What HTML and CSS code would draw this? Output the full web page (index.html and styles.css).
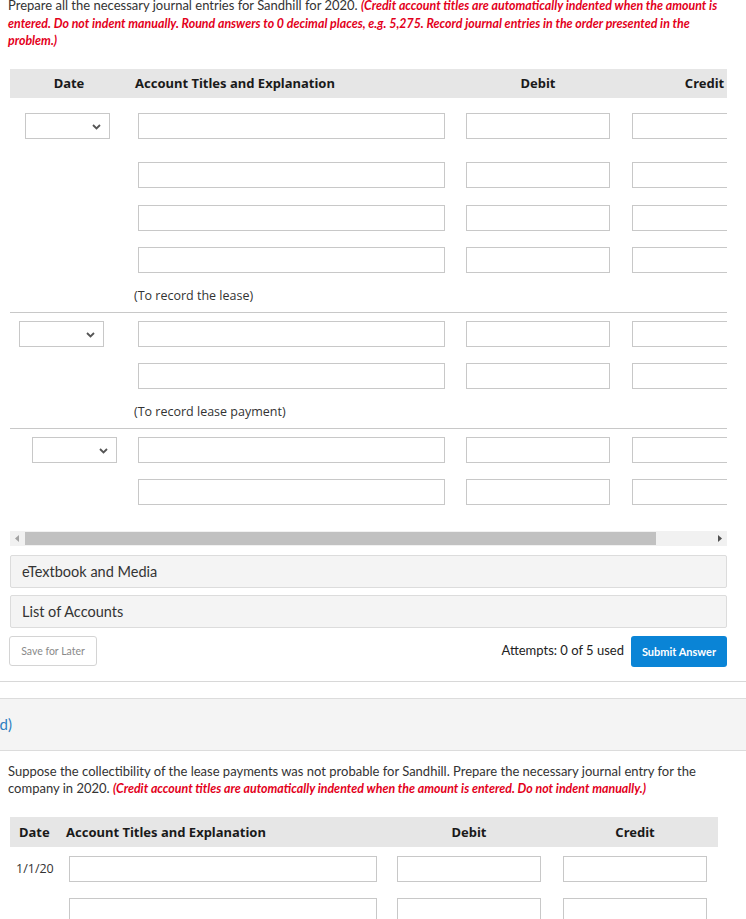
FILE: index.html
```html
<!DOCTYPE html>
<html>
<head>
<meta charset="utf-8">
<link rel="stylesheet" href="styles.css">
</head>
<body>
<p class="intro">Prepare all the necessary journal entries for Sandhill for 2020. <em class="warn">(Credit account titles are automatically indented when the amount is entered. Do not indent manually. Round answers to 0 decimal places, e.g. 5,275. Record journal entries in the order presented in the problem.)</em></p>

<div class="part">
  <div class="jtable">
    <div class="jhead">
      <div class="h-date">Date</div>
      <div class="h-acct">Account Titles and Explanation</div>
      <div class="h-debit">Debit</div>
      <div class="h-credit">Credit</div>
    </div>

    <div class="row r1">
      <div class="c-date"><div class="sel sel-a"><svg class="chev" width="9" height="6" viewBox="0 0 9 6"><path d="M1 1 L4.5 4.5 L8 1" fill="none" stroke="#555" stroke-width="1.8"/></svg></div></div>
      <div class="inp acct"></div><div class="inp num debit"></div><div class="inp num credit"></div>
    </div>
    <div class="row r2">
      <div class="c-date"></div>
      <div class="inp acct"></div><div class="inp num debit"></div><div class="inp num credit"></div>
    </div>
    <div class="row r3">
      <div class="c-date"></div>
      <div class="inp acct"></div><div class="inp num debit"></div><div class="inp num credit"></div>
    </div>
    <div class="row r4">
      <div class="c-date"></div>
      <div class="inp acct"></div><div class="inp num debit"></div><div class="inp num credit"></div>
    </div>
    <div class="memo">(To record the lease)</div>

    <div class="row r5">
      <div class="c-date"><div class="sel sel-b"><svg class="chev" width="9" height="6" viewBox="0 0 9 6"><path d="M1 1 L4.5 4.5 L8 1" fill="none" stroke="#555" stroke-width="1.8"/></svg></div></div>
      <div class="inp acct"></div><div class="inp num debit"></div><div class="inp num credit"></div>
    </div>
    <div class="row r6">
      <div class="c-date"></div>
      <div class="inp acct"></div><div class="inp num debit"></div><div class="inp num credit"></div>
    </div>
    <div class="memo">(To record lease payment)</div>

    <div class="row r5">
      <div class="c-date"><div class="sel sel-c"><svg class="chev" width="9" height="6" viewBox="0 0 9 6"><path d="M1 1 L4.5 4.5 L8 1" fill="none" stroke="#555" stroke-width="1.8"/></svg></div></div>
      <div class="inp acct"></div><div class="inp num debit"></div><div class="inp num credit"></div>
    </div>
    <div class="row r6">
      <div class="c-date"></div>
      <div class="inp acct"></div><div class="inp num debit"></div><div class="inp num credit"></div>
    </div>
  </div>

  <div class="hscroll">
    <svg class="arr" width="6" height="7" viewBox="0 0 6 7"><path d="M5 0 L5 7 L1 3.5 Z" fill="#a3a3a3"/></svg>
    <div class="thumb"></div>
    <svg class="arr arr-r" width="6" height="7" viewBox="0 0 6 7"><path d="M1 0 L1 7 L5 3.5 Z" fill="#505050"/></svg>
  </div>

  <div class="panel p1">eTextbook and Media</div>
  <div class="panel p2">List of Accounts</div>

  <div class="actions">
    <button class="btn-save">Save for Later</button>
    <div class="attempts">Attempts: 0 of 5 used</div>
    <button class="btn-submit">Submit Answer</button>
  </div>
</div>

<div class="rule"></div>

<div class="band"><span class="band-label">(d)</span></div>

<p class="intro2">Suppose the collectibility of the lease payments was not probable for Sandhill. Prepare the necessary journal entry for the company in 2020. <em class="warn">(Credit account titles are automatically indented when the amount is entered. Do not indent manually.)</em></p>

<div class="jtable2">
  <div class="jhead2">
    <div class="h2-date">Date</div>
    <div class="h2-acct">Account Titles and Explanation</div>
    <div class="h2-debit">Debit</div>
    <div class="h2-credit">Credit</div>
  </div>
  <div class="row2 first">
    <div class="d2">1/1/20</div>
    <div class="inp acct2"></div><div class="inp num2 debit2"></div><div class="inp num2 credit2"></div>
  </div>
  <div class="row2 second">
    <div class="d2"></div>
    <div class="inp acct2"></div><div class="inp num2 debit2"></div><div class="inp num2 credit2"></div>
  </div>
</div>
</body>
</html>
```

FILE: styles.css
```css
html, body {
  margin: 0;
  padding: 0;
  background: #fff;
  width: 746px;
  height: 919px;
  overflow: hidden;
}
body {
  font-family: Lato, "Open Sans", sans-serif;
  color: #333;
  font-size: 13px;
}
.intro {
  margin: -3px 0 0 8px;
  width: 720px;
  line-height: 17.5px;
  font-size: 13px;
  color: #333;
}
.warn {
  color: #e3001b;
  font-weight: bold;
  font-style: italic;
  font-size: 12.4px;
}
.part {
  margin-left: 10px;
  width: 717px;
}
.jtable {
  width: 717px;
  overflow: hidden;
  margin-top: 19px;
}
.jhead {
  display: flex;
  align-items: center;
  height: 29px;
  background: #e6e6e6;
  font-family: "Noto Sans", "DejaVu Sans", sans-serif;
  font-weight: bold;
  font-size: 13px;
  color: #1a1a1a;
  width: 717px;
}
.h-date { width: 118px; text-align: center; flex: none; }
.h-acct { margin-left: 7px; width: 310px; flex: none; }
.h-debit { margin-left: 21px; width: 144px; text-align: center; flex: none; }
.h-credit { margin-left: 22px; width: 145px; text-align: center; flex: none; }

.row {
  display: flex;
  align-items: center;
  height: 26px;
  width: 900px;
}
.r1 { margin-top: 15px; }
.r2 { margin-top: 23px; }
.r3 { margin-top: 17px; }
.r4 { margin-top: 16px; }
.r5 { margin-top: 8px; }
.r6 { margin-top: 16px; }

.c-date { width: 118px; flex: none; height: 26px; }
.sel {
  width: 85px;
  height: 26px;
  box-sizing: border-box;
  border: 1px solid #c8c8c8;
  background: #fff;
  position: relative;
}
.sel-a { margin-left: 15px; }
.sel-b { margin-left: 9px; }
.sel-c { margin-left: 22px; }
.chev {
  position: absolute;
  right: 8px;
  top: 10px;
}
.inp {
  height: 26px;
  box-sizing: border-box;
  border: 1px solid #c8c8c8;
  background: #fff;
  flex: none;
}
.acct { margin-left: 10px; width: 307px; }
.num { width: 144px; }
.debit { margin-left: 21px; }
.credit { margin-left: 22px; width: 145px; }

.memo {
  font-family: "Open Sans", sans-serif;
  font-size: 12.5px;
  color: #333;
  height: 18px;
  line-height: 18px;
  margin-top: 14px;
  padding-left: 124px;
  padding-bottom: 7px;
  border-bottom: 1px solid #c8c8c8;
}

.hscroll {
  margin-top: 26px;
  height: 15px;
  background: #f1f1f1;
  display: flex;
  align-items: center;
}
.arr { flex: none; margin-left: 4px; }
.thumb {
  margin-left: 5px;
  width: 631px;
  height: 13px;
  background: #c1c1c1;
}
.arr-r { margin-left: 61px; }

.panel {
  box-sizing: border-box;
  height: 33px;
  border: 1px solid #dcdcdc;
  border-radius: 2px;
  background: #f4f4f4;
  font-size: 14.5px;
  color: #333;
  padding-left: 11px;
  line-height: 31px;
}
.p1 { margin-top: 9px; }
.p2 { margin-top: 7px; }

.actions {
  margin-top: 8px;
  height: 31px;
  display: flex;
  align-items: center;
}
.btn-save {
  margin-left: -1px;
  width: 88px;
  height: 30px;
  box-sizing: border-box;
  background: #fff;
  border: 1px solid #d4d4d4;
  border-radius: 3px;
  font-family: Lato, sans-serif;
  font-size: 10.5px;
  color: #8a8a8a;
  padding: 0;
}
.attempts {
  margin-left: auto;
  font-size: 13px;
  color: #222;
  margin-right: 7px;
  margin-top: -3px;
}
.btn-submit {
  width: 96px;
  height: 31px;
  background: #0a84d6;
  color: #fff;
  border: none;
  border-radius: 3px;
  font-family: Lato, sans-serif;
  font-weight: bold;
  font-size: 11px;
  padding: 0;
}

.rule {
  margin-top: 14px;
  height: 0;
  border-top: 1px solid #d8d8d8;
}
.band {
  margin-top: 16px;
  height: 51px;
  border-top: 1px solid #dcdcdc;
  border-bottom: 1px solid #dcdcdc;
  background: #f4f4f4;
  display: flex;
  align-items: center;
}
.band-label {
  margin-left: -4px;
  font-size: 15px;
  color: #2f7fc1;
}
.intro2 {
  margin: 12px 0 0 8px;
  width: 700px;
  line-height: 17.5px;
  font-size: 13px;
  color: #333;
}

.jtable2 {
  margin-left: 10px;
  width: 708px;
  margin-top: 19px;
}
.jhead2 {
  display: flex;
  align-items: center;
  height: 30px;
  background: #e6e6e6;
  font-family: "Noto Sans", "DejaVu Sans", sans-serif;
  font-weight: bold;
  font-size: 13px;
  color: #1a1a1a;
}
.h2-date { margin-left: 9px; width: 47px; flex: none; }
.h2-acct { width: 320px; flex: none; }
.h2-debit { margin-left: 11px; width: 144px; text-align: center; flex: none; }
.h2-credit { margin-left: 22px; width: 144px; text-align: center; flex: none; }

.row2 {
  display: flex;
  align-items: center;
  height: 26px;
}
.row2.first { margin-top: 9px; }
.row2.second { margin-top: 16px; }
.d2 {
  width: 59px;
  flex: none;
  padding-left: 6px;
  box-sizing: border-box;
  font-family: "Open Sans", sans-serif;
  font-size: 12.5px;
  color: #333;
}
.acct2 { width: 308px; }
.num2 { width: 144px; }
.debit2 { margin-left: 20px; }
.credit2 { margin-left: 22px; }
```
